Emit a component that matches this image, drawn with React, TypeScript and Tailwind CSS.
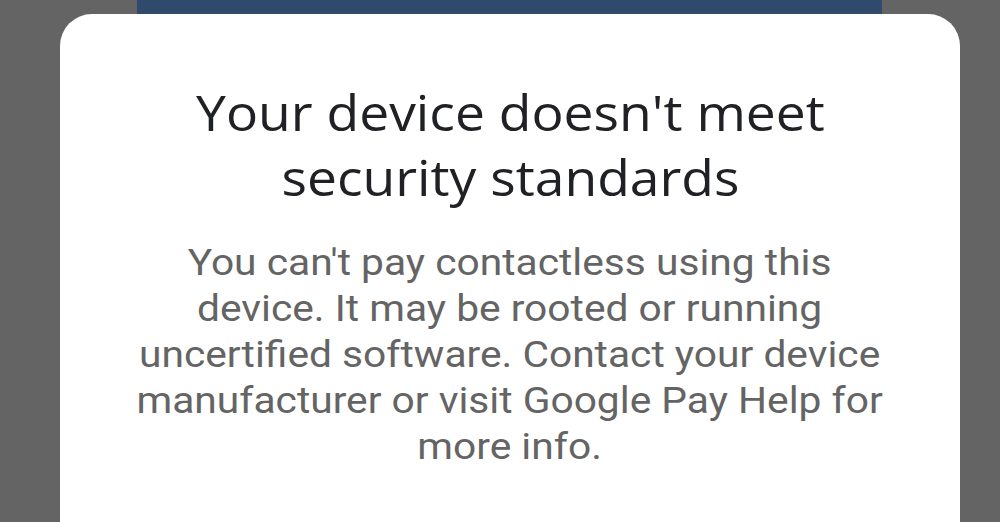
export default function App() {
  return (
    <div className="w-[1000px] h-[522px] bg-[#646464] overflow-hidden flex flex-col">
      <div className="flex h-[14px] shrink-0">
        <div className="w-[137px]" />
        <div className="w-[745px] bg-[#2f4a6a]" />
      </div>
      <div className="mx-[60px] w-[900px] grow bg-white rounded-t-[32px] flex flex-col items-center pt-[66px]">
        <h1
          className="text-[49px] leading-[65px] text-[#202124] text-center font-normal whitespace-nowrap scale-x-[1.09]"
          style={{ fontFamily: '"Open Sans", Roboto, sans-serif' }}
        >
          Your device doesn't meet
          <br />
          security standards
        </h1>
        <p
          className="mt-[29px] text-[37.5px] leading-[46px] text-[#646464] text-center whitespace-nowrap scale-x-[1.086]"
          style={{ fontFamily: 'Roboto, "Noto Sans", sans-serif' }}
        >
          You can't pay contactless using this
          <br />
          device. It may be rooted or running
          <br />
          uncertified software. Contact your device
          <br />
          manufacturer or visit Google Pay Help for
          <br />
          more info.
        </p>
      </div>
    </div>
  );
}
